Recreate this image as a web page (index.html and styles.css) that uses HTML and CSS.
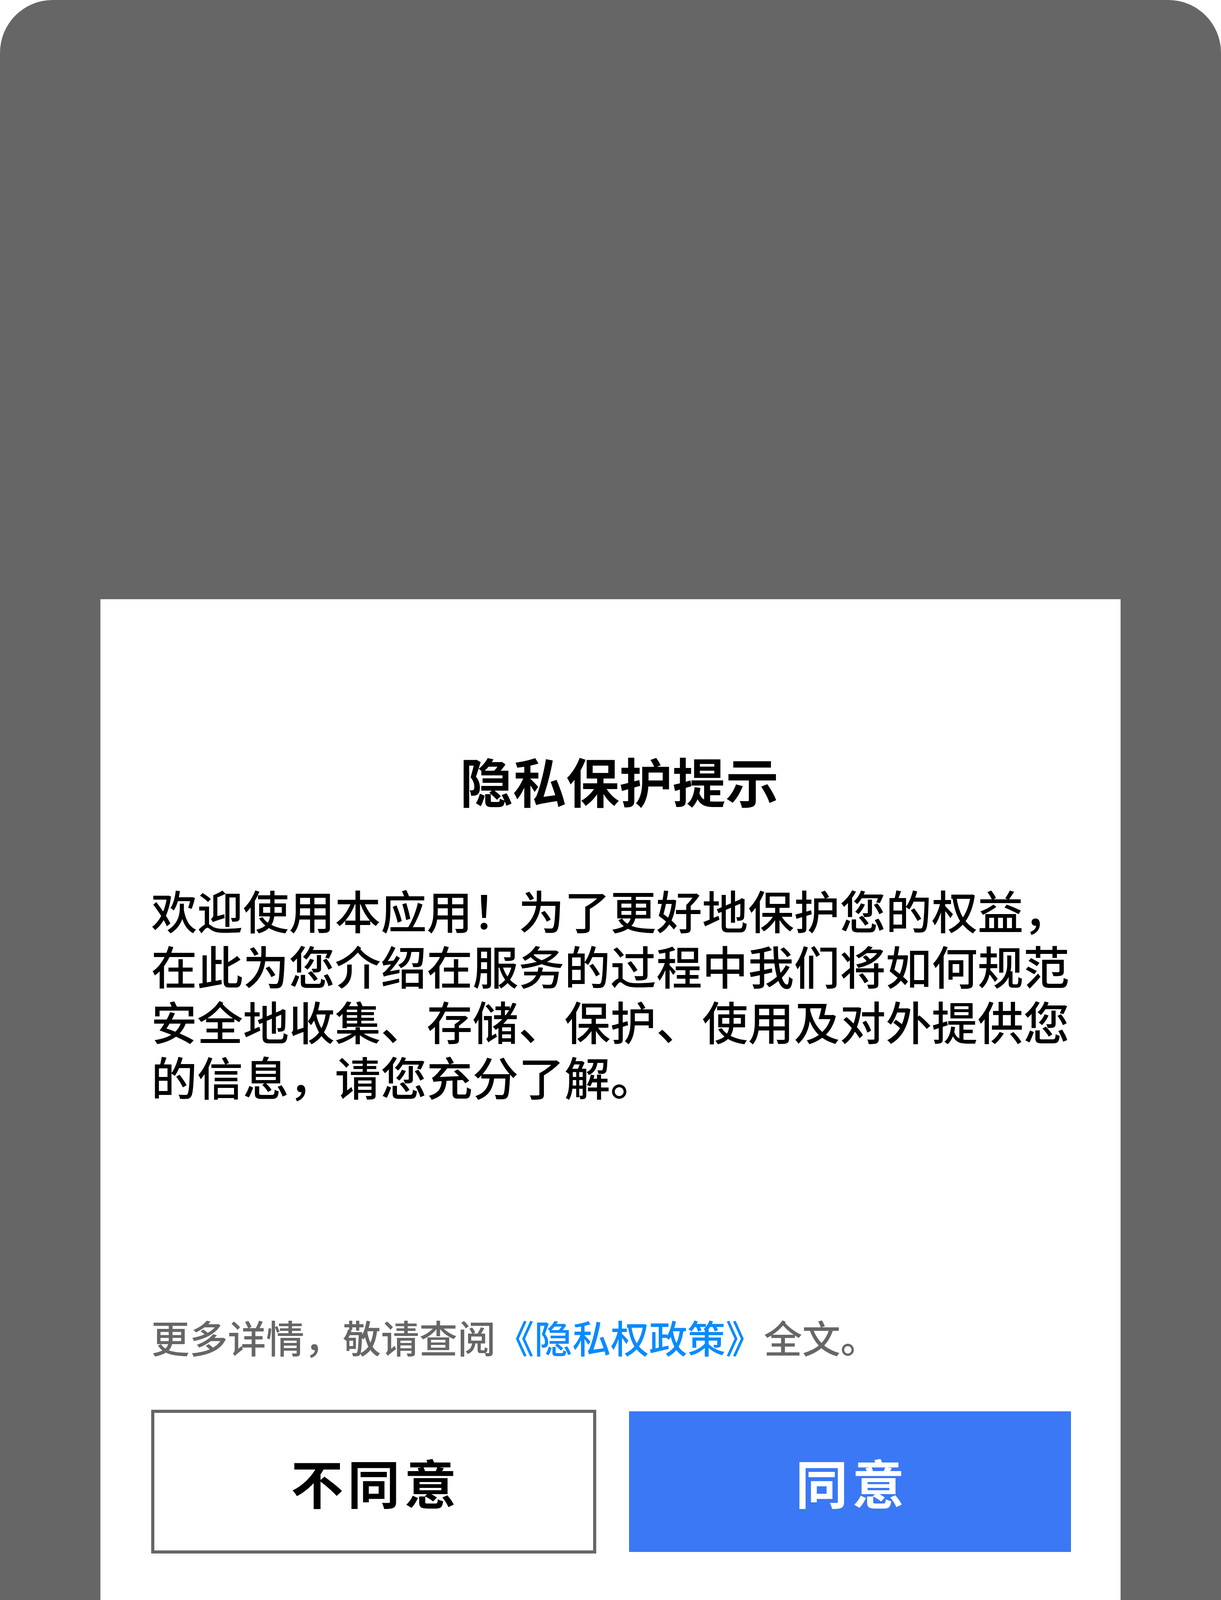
FILE: index.html
```html
<!DOCTYPE html>
<html lang="zh-CN">
<head>
<meta charset="utf-8">
<meta name="viewport" content="width=3125">
<title>隐私保护提示</title>
<link rel="stylesheet" href="styles.css">
</head>
<body>
<div class="screen">
  <div class="dialog">
    <h1 class="title">隐私保护提示</h1>
    <p class="message">欢迎使用本应用！为了更好地保护您的权益，在此为您介绍在服务的过程中我们将如何规范安全地收集、存储、保护、使用及对外提供您的信息，请您充分了解。</p>
    <p class="more">更多详情，敬请查阅<a class="policy-link" href="#">《隐私权政策》</a>全文。</p>
    <div class="actions">
      <button class="btn btn-decline" type="button">不同意</button>
      <button class="btn btn-agree" type="button">同意</button>
    </div>
  </div>
</div>
</body>
</html>
```

FILE: styles.css
```css
html, body {
  margin: 0;
  padding: 0;
  width: 3125px;
  height: 6009px;
  overflow: hidden;
  background: #ffffff;
}

body {
  font-family: "Noto Sans CJK SC", "Noto Sans", sans-serif;
}

.screen {
  width: 3125px;
  height: 6009px;
  background: #666666;
  border-radius: 135px;
  padding-top: 1534px;
  box-sizing: border-box;
  overflow: hidden;
}

.dialog {
  width: 2611px;
  height: 2614px;
  margin-left: 257px;
  background: #ffffff;
  box-sizing: border-box;
  padding: 368px 123px 0 130px;
  display: flex;
  flex-direction: column;
}

.title {
  margin: 0;
  padding-left: 38px;
  font-size: 136px;
  line-height: 190px;
  font-weight: 700;
  color: #000000;
  text-align: center;
}

.message {
  margin: 165px 0 0 0;
  font-size: 117.5px;
  line-height: 142px;
  font-weight: 500;
  color: #000000;
}

.more {
  margin: 531px 0 0 0;
  font-size: 98px;
  line-height: 130px;
  font-weight: 500;
  color: #666666;
}

.policy-link {
  color: #0a8aff;
  text-decoration: none;
}

.actions {
  margin-top: 123px;
  display: flex;
  gap: 80px;
}

.btn {
  flex: 0 0 1139px;
  height: 368px;
  box-sizing: border-box;
  font-family: "Noto Sans CJK SC", "Noto Sans", sans-serif;
  font-size: 134px;
  font-weight: 700;
  letter-spacing: 11px;
  padding: 0 0 0 11px;
  margin: 0;
  cursor: pointer;
}

.btn-decline {
  background: #ffffff;
  color: #000000;
  border: 8px solid #666666;
}

.btn-agree {
  background: #3a78f5;
  background-clip: padding-box;
  color: #ffffff;
  border: 4px solid #ffffff;
}
```
